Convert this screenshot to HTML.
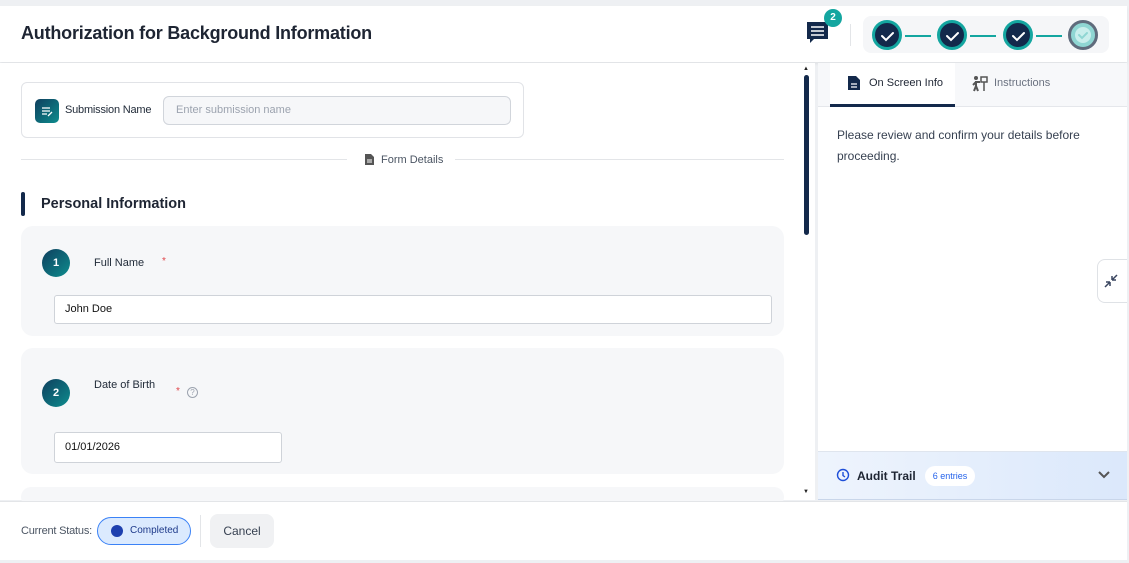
<!DOCTYPE html>
<html><head><meta charset="utf-8"><style>
*{box-sizing:border-box;margin:0;padding:0}
body{width:1129px;height:563px;overflow:hidden;background:#eef0f3;font-family:"Liberation Sans",sans-serif;position:relative;color:#1f2937}
.abs{position:absolute}
.header{left:0;top:6px;width:1127px;height:56px;background:#fff;box-shadow:0 2px 3px rgba(0,0,0,.06)}
.title{left:21px;top:23px;font-size:18px;font-weight:bold;color:#1e2533;letter-spacing:-0.2px}
.step{width:30px;height:30px;border-radius:50%;background:#13294b;border:3px solid #14a6a0;position:absolute;top:20px}
.line{position:absolute;top:35px;height:2px;background:#14a6a0;width:26px}
.left{left:0;top:63px;width:815px;height:437px;background:#fff}
.right{left:818px;top:63px;width:309px;height:437px;background:#fff}
.card{background:#f6f7f9;border-radius:12px;position:absolute}
.num{position:absolute;width:28px;height:28px;border-radius:50%;background:linear-gradient(135deg,#0f3f5e,#0e8d8e);color:#fff;font-size:11px;font-weight:bold;text-align:center;line-height:28px}
.input{position:absolute;background:#fff;border:1px solid #cfd3d9;border-radius:3px;font-size:11px;padding-left:10px;color:#111}
.footer{left:0;top:501px;width:1127px;height:59px;background:#fff;border-top:1px solid #e3e5e8}
</style></head><body>
<div class="abs header"></div>
<div class="abs title">Authorization for Background Information</div>
<svg class="abs" style="left:805px;top:19px" width="26" height="26" viewBox="0 0 26 26"><path d="M2 3h21v17H9l-4 4v-4H2z" fill="#13294b"/><path d="M6 8h13M6 12h13M6 16h13" stroke="#fff" stroke-width="1.6"/></svg>
<div class="abs" style="left:824px;top:9px;width:18px;height:18px;border-radius:50%;background:#14a6a0;color:#fff;font-size:10px;font-weight:bold;text-align:center;line-height:18px">2</div>
<div class="abs" style="left:850px;top:24px;width:1px;height:22px;background:#e3e5e8"></div>
<div class="abs" style="left:863px;top:16px;width:246px;height:37px;background:#f5f6f8;border-radius:8px"></div>
<div class="step" style="left:872px"></div><div class="line" style="left:905px"></div>
<div class="step" style="left:937px"></div><div class="line" style="left:970px"></div>
<div class="step" style="left:1003px"></div><div class="line" style="left:1036px"></div>
<div class="step" style="left:1068px;background:#8fd6d3;border-color:#5f6b7c"></div>
<svg class="abs" style="left:872px;top:20px" width="240" height="32"><circle cx="211" cy="15" r="8" fill="#c9eeec"/><g fill="none" stroke="#fff" stroke-width="2" stroke-linecap="round"><path d="M10 16l4 4 7-7"/><path d="M75 16l4 4 7-7"/><path d="M141 16l4 4 7-7"/><path d="M207 15l3 3 5-5" stroke="#8fd6d3"/></g></svg>

<div class="abs left"></div>
<div class="abs" style="left:804px;top:75px;width:5px;height:160px;background:#13294b;border-radius:3px"></div>
<div class="abs" style="left:803px;top:66px;font-size:6px;color:#222">▲</div>
<div class="abs" style="left:803px;top:489px;font-size:6px;color:#222">▼</div>
<div class="abs" style="left:21px;top:82px;width:503px;height:56px;border:1.5px solid #e1e3e7;border-radius:6px;background:#fff"></div>
<div class="abs" style="left:35px;top:99px;width:24px;height:24px;border-radius:5px;background:linear-gradient(135deg,#0f3f5e,#0e8d8e)"></div>
<svg class="abs" style="left:35px;top:99px" width="24" height="24"><path d="M7 9h8M7 12h8M7 15h5M13 17l4-4" stroke="#fff" stroke-width="1.3" fill="none"/></svg>
<div class="abs" style="left:65px;top:104px;font-size:11px;color:#1f2937;letter-spacing:-0.2px">Submission Name</div>
<div class="abs" style="left:163px;top:96px;width:348px;height:29px;background:#f6f7f9;border:1px solid #d1d5db;border-radius:6px;font-size:11px;color:#9ca3af;padding:7px 12px">Enter submission name</div>
<div class="abs" style="left:21px;top:159px;width:326px;height:1px;background:#e3e5e8"></div>
<div class="abs" style="left:455px;top:159px;width:329px;height:1px;background:#e3e5e8"></div>
<svg class="abs" style="left:365px;top:154px" width="9" height="11"><path d="M0 0h6l3 3v8H0z" fill="#555"/><path d="M2 6h5M2 8h5" stroke="#fff"/></svg>
<div class="abs" style="left:381px;top:154px;font-size:11px;color:#4b5563">Form Details</div>
<div class="abs" style="left:21px;top:192px;width:4px;height:24px;background:#13294b;border-radius:2px"></div>
<div class="abs" style="left:41px;top:196px;font-size:14.5px;font-weight:bold;color:#1e2533">Personal Information</div>
<div class="card" style="left:21px;top:226px;width:763px;height:110px"></div>
<div class="num" style="left:42px;top:249px">1</div>
<div class="abs" style="left:94px;top:257px;font-size:11px">Full Name</div>
<div class="abs" style="left:162px;top:256px;font-size:10px;color:#e0474c">*</div>
<div class="input" style="left:54px;top:295px;width:718px;height:29px;line-height:27px">John Doe</div>
<div class="card" style="left:21px;top:348px;width:763px;height:126px"></div>
<div class="num" style="left:42px;top:379px">2</div>
<div class="abs" style="left:94px;top:379px;font-size:11px">Date of Birth</div>
<div class="abs" style="left:176px;top:386px;font-size:10px;color:#e0474c">*</div>
<div class="abs" style="left:187px;top:387px;width:11px;height:11px;border:1px solid #9ca3af;border-radius:50%;font-size:8px;color:#9ca3af;text-align:center;line-height:9px">?</div>
<div class="input" style="left:54px;top:432px;width:228px;height:31px;line-height:29px">01/01/2026</div>
<div class="card" style="left:21px;top:487px;width:763px;height:20px"></div>

<div class="abs right"></div>
<div class="abs" style="left:818px;top:63px;width:309px;height:44px;background:#f7f8fa;border-bottom:1px solid #e5e7eb"></div>
<div class="abs" style="left:830px;top:63px;width:125px;height:44px;background:#fff;border-bottom:3px solid #13294b"></div>
<svg class="abs" style="left:848px;top:76px" width="12" height="14"><path d="M0 0h8l4 4v10H0z" fill="#13294b"/><path d="M3 8h6M3 11h6" stroke="#fff" stroke-width="1.2"/></svg>
<div class="abs" style="left:869px;top:77px;font-size:11px;color:#1e2533">On Screen Info</div>
<svg class="abs" style="left:971px;top:75px" width="18" height="17"><circle cx="5" cy="3" r="2" fill="#555"/><path d="M5 6v5M5 11l-2 5M5 11l2 5M5 7l-3 3M5 7l4 0" stroke="#555" stroke-width="2" fill="none"/><path d="M10 2h6v5h-6zM13 7v9" stroke="#555" stroke-width="1.5" fill="none"/></svg>
<div class="abs" style="left:994px;top:77px;font-size:11px;color:#6b7280">Instructions</div>
<div class="abs" style="left:837px;top:125px;font-size:12px;line-height:21px;width:270px;color:#374151">Please review and confirm your details before proceeding.</div>
<div class="abs" style="left:1097px;top:259px;width:30px;height:44px;background:#fff;border:1.5px solid #dfe2e6;border-right:none;border-radius:8px 0 0 8px"></div>
<svg class="abs" style="left:1103px;top:273px" width="16" height="16"><path d="M2 14l5-5M7 9v4M7 9h-4M14 2l-5 5M9 7V3M9 7h4" stroke="#3a4660" stroke-width="1.5" fill="none"/></svg>
<div class="abs" style="left:818px;top:451px;width:309px;height:49px;background:linear-gradient(90deg,#eef4fd,#dbe8fb);border-top:1px solid #dfe5ee;border-bottom:1px solid #c9d6ea"></div>
<svg class="abs" style="left:836px;top:468px" width="14" height="14"><circle cx="7" cy="7" r="5.5" fill="none" stroke="#1d4ed8" stroke-width="1.4"/><path d="M7 4v3.5l2 1.5" stroke="#1d4ed8" stroke-width="1.4" fill="none"/></svg>
<div class="abs" style="left:857px;top:469px;font-size:12px;font-weight:bold;color:#1e2533">Audit Trail</div>
<div class="abs" style="left:925px;top:466px;width:50px;height:20px;border-radius:10px;background:#fff;font-size:9px;color:#2563eb;text-align:center;line-height:20px">6 entries</div>
<svg class="abs" style="left:1097px;top:470px" width="14" height="10"><path d="M2 2l5 5 5-5" stroke="#555" stroke-width="2" fill="none"/></svg>

<div class="abs footer"></div>
<div class="abs" style="left:21px;top:525px;font-size:11px;color:#4b5563;letter-spacing:-0.2px">Current Status:</div>
<div class="abs" style="left:97px;top:517px;width:94px;height:28px;border:1px solid #3b82f6;background:#dbeafe;border-radius:14px"></div>
<div class="abs" style="left:111px;top:525px;width:12px;height:12px;border-radius:50%;background:#1e40af"></div>
<div class="abs" style="left:130px;top:525px;font-size:10px;color:#1e3a8a">Completed</div>
<div class="abs" style="left:200px;top:515px;width:1px;height:32px;background:#e3e5e8"></div>
<div class="abs" style="left:210px;top:514px;width:64px;height:34px;border-radius:8px;background:#f0f1f3;font-size:12px;color:#374151;text-align:center;line-height:34px">Cancel</div>
</body></html>
